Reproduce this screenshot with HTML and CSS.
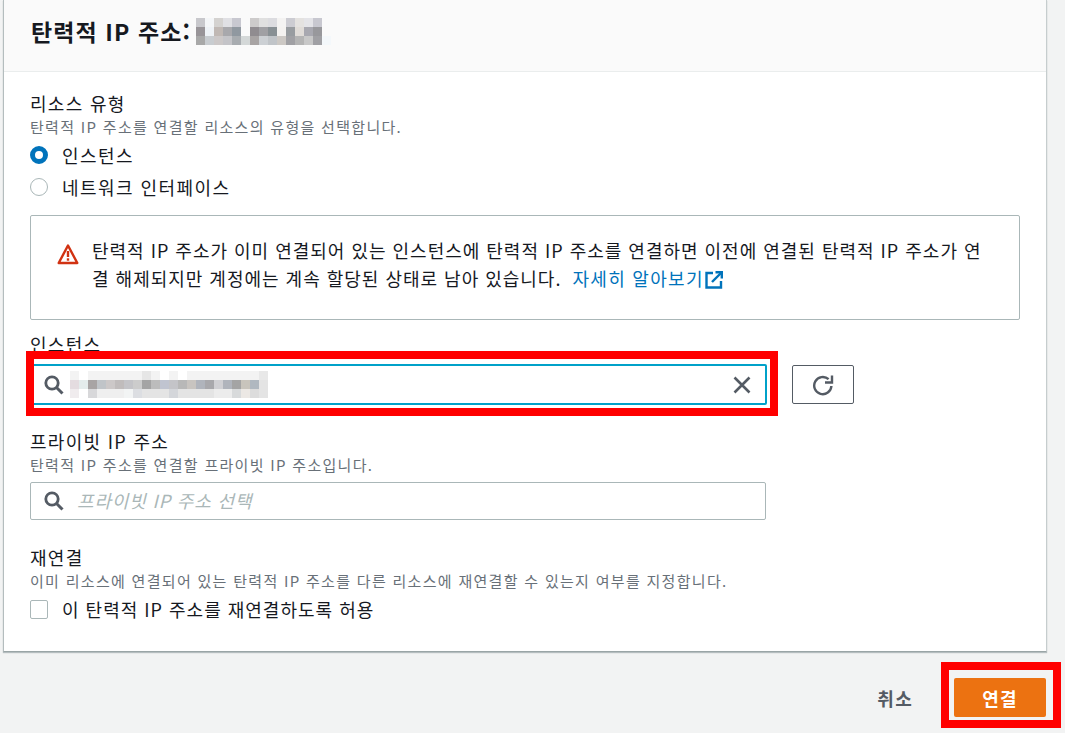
FILE: index.html
```html
<!DOCTYPE html>
<html lang="ko">
<head>
<meta charset="utf-8">
<title>탄력적 IP 주소 연결</title>
<link rel="stylesheet" href="styles.css">
</head>
<body>
<main class="page">
  <section class="card">
    <header class="card-head">
      <h1 class="title">탄력적 IP 주소:</h1>
      <svg class="mask" width="144" height="27" viewBox="0 0 16 3" shape-rendering="crispEdges" aria-hidden="true">
        <g><rect x="0" y="0" width="1" height="1" fill="#c8c8cc"/><rect x="1" y="0" width="1" height="1" fill="#f4f6f8"/><rect x="2" y="0" width="1" height="1" fill="#d4d2d0"/><rect x="3" y="0" width="1" height="1" fill="#e0e0e4"/><rect x="4" y="0" width="1" height="1" fill="#c8c8d0"/><rect x="6" y="0" width="1" height="1" fill="#cdcbcb"/><rect x="7" y="0" width="1" height="1" fill="#e0e0e0"/><rect x="8" y="0" width="1" height="1" fill="#dcdce0"/><rect x="9" y="0" width="1" height="1" fill="#f4f3f2"/><rect x="10" y="0" width="1" height="1" fill="#ccccd2"/><rect x="11" y="0" width="1" height="1" fill="#e4e2e0"/><rect x="12" y="0" width="1" height="1" fill="#e4e4e8"/><rect x="13" y="0" width="1" height="1" fill="#c8c8d0"/></g>
        <g><rect x="0" y="1" width="1" height="1" fill="#989498"/><rect x="1" y="1" width="1" height="1" fill="#eef2f6"/><rect x="2" y="1" width="1" height="1" fill="#c0b8b4"/><rect x="3" y="1" width="1" height="1" fill="#a8a8ac"/><rect x="4" y="1" width="1" height="1" fill="#9098a0"/><rect x="6" y="1" width="1" height="1" fill="#908c90"/><rect x="7" y="1" width="1" height="1" fill="#a0a0a4"/><rect x="8" y="1" width="1" height="1" fill="#889094"/><rect x="9" y="1" width="1" height="1" fill="#f4f2f0"/><rect x="10" y="1" width="1" height="1" fill="#989ca0"/><rect x="11" y="1" width="1" height="1" fill="#e0dcd8"/><rect x="12" y="1" width="1" height="1" fill="#a8a8b0"/><rect x="13" y="1" width="1" height="1" fill="#98989c"/></g>
        <g><rect x="0" y="2" width="1" height="1" fill="#a8a8a8"/><rect x="1" y="2" width="1" height="1" fill="#c8ccd0"/><rect x="2" y="2" width="1" height="1" fill="#ccc8c8"/><rect x="3" y="2" width="1" height="1" fill="#c4c4c8"/><rect x="4" y="2" width="1" height="1" fill="#a8acb0"/><rect x="5" y="2" width="1" height="1" fill="#d4d8d8"/><rect x="6" y="2" width="1" height="1" fill="#a8a4a4"/><rect x="7" y="2" width="1" height="1" fill="#ccd0d4"/><rect x="8" y="2" width="1" height="1" fill="#c0c4c8"/><rect x="9" y="2" width="1" height="1" fill="#ccc8c4"/><rect x="10" y="2" width="1" height="1" fill="#a0a0a4"/><rect x="11" y="2" width="1" height="1" fill="#b4b4b4"/><rect x="12" y="2" width="1" height="1" fill="#c8c8c8"/><rect x="13" y="2" width="1" height="1" fill="#a0a0a4"/><rect x="14" y="2" width="1" height="1" fill="#f4f8fb"/></g>
      </svg>
    </header>

    <div class="card-body">
      <div class="field field-type">
        <div class="label">리소스 유형</div>
        <div class="hint">탄력적 IP 주소를 연결할 리소스의 유형을 선택합니다.</div>
        <div class="option">
          <span class="radio radio-on"></span>
          <span class="option-text">인스턴스</span>
        </div>
        <div class="option">
          <span class="radio"></span>
          <span class="option-text">네트워크 인터페이스</span>
        </div>
      </div>

      <div class="alert">
        <svg class="alert-icon" width="22" height="22" viewBox="0 0 22 22" aria-hidden="true">
          <path d="M11 2.5 20.3 20H1.7Z" fill="none" stroke="#d13212" stroke-width="2.4" stroke-linejoin="round"/>
          <rect x="9.8" y="8" width="2.4" height="6" fill="#d13212"/>
          <rect x="9.8" y="15.3" width="2.4" height="2.4" fill="#d13212"/>
        </svg>
        <p class="alert-text">탄력적 IP 주소가 이미 연결되어 있는 인스턴스에 탄력적 IP 주소를 연결하면 이전에 연결된 탄력적 IP 주소가 연결 해제되지만 계정에는 계속 할당된 상태로 남아 있습니다. <a class="link" href="#">자세히 알아보기<svg class="ext-icon" width="18" height="18" viewBox="0 0 18 18" aria-hidden="true"><path d="M8 2H1.5V16.5H16V10" fill="none" stroke="#0073bb" stroke-width="2.4"/><path d="M10.5 1.2H16.8V7.5" fill="none" stroke="#0073bb" stroke-width="2.4"/><path d="M16.5 1.5 7 11" fill="none" stroke="#0073bb" stroke-width="2.4"/></svg></a></p>
      </div>

      <div class="field field-instance">
        <div class="label">인스턴스</div>
        <div class="input-row">
          <div class="search search-active">
            <svg class="search-icon" width="20" height="20" viewBox="0 0 20 20" aria-hidden="true"><circle cx="8" cy="8" r="6.2" fill="none" stroke="#545b64" stroke-width="2.8"/><path d="M12.5 12.5 18.5 18.5" stroke="#545b64" stroke-width="3"/></svg>
            <svg class="mask mask-input" width="198" height="27" viewBox="0 0 22 3" shape-rendering="crispEdges" aria-hidden="true">
              <g fill="#f3f3f3"><rect x="0" y="0" width="1" height="1"/><rect x="2" y="0" width="7" height="1"/><rect x="8" y="0" width="1" height="1" fill="#e6e6e6"/><rect x="9" y="0" width="1" height="1"/><rect x="11" y="0" width="1" height="1"/><rect x="13" y="0" width="8" height="1"/><rect x="21" y="0" width="1" height="1" fill="#e8e8e8"/></g>
              <rect x="0" y="1" width="1" height="1" fill="#e4dce0"/><rect x="1" y="1" width="1" height="1" fill="#e4ecec"/><rect x="2" y="1" width="1" height="1" fill="#a8a4a4"/><rect x="3" y="1" width="1" height="1" fill="#c0c4c8"/><rect x="4" y="1" width="1" height="1" fill="#ccc8c8"/><rect x="5" y="1" width="1" height="1" fill="#c0bcbc"/><rect x="6" y="1" width="1" height="1" fill="#c4c4c8"/><rect x="7" y="1" width="1" height="1" fill="#cccccc"/><rect x="8" y="1" width="1" height="1" fill="#a4a4a4"/><rect x="9" y="1" width="1" height="1" fill="#bcbcbc"/><rect x="10" y="1" width="1" height="1" fill="#c0c4d0"/><rect x="11" y="1" width="1" height="1" fill="#c4c4c8"/><rect x="12" y="1" width="1" height="1" fill="#b8b8b8"/><rect x="13" y="1" width="1" height="1" fill="#c8c4c0"/><rect x="14" y="1" width="1" height="1" fill="#b0b4bc"/><rect x="15" y="1" width="1" height="1" fill="#a8a8ac"/><rect x="16" y="1" width="1" height="1" fill="#d0d0d4"/><rect x="17" y="1" width="1" height="1" fill="#b0b4bc"/><rect x="18" y="1" width="1" height="1" fill="#a4a4a4"/><rect x="19" y="1" width="1" height="1" fill="#c8c4bc"/><rect x="20" y="1" width="1" height="1" fill="#b0b8c0"/><rect x="21" y="1" width="1" height="1" fill="#e4e4e4"/>
              <g fill="#e4e4e4"><rect x="0" y="2" width="1" height="1" fill="#f0ecee"/><rect x="2" y="2" width="1" height="1" fill="#d8d8da"/><rect x="3" y="2" width="3" height="1" fill="#efefef"/><rect x="6" y="2" width="1" height="1" fill="#f2f4f4"/><rect x="7" y="2" width="1" height="1" fill="#dcdee2"/><rect x="8" y="2" width="3" height="1"/><rect x="11" y="2" width="1" height="1" fill="#d4d6da"/><rect x="12" y="2" width="4" height="1"/><rect x="16" y="2" width="2" height="1" fill="#ececec"/><rect x="18" y="2" width="1" height="1" fill="#d8dadb"/><rect x="19" y="2" width="1" height="1" fill="#ece8e4"/><rect x="20" y="2" width="1" height="1" fill="#dcdcdc"/><rect x="21" y="2" width="1" height="1"/></g>
            </svg>
            <svg class="clear-icon" width="20" height="20" viewBox="0 0 20 20" aria-hidden="true"><path d="M2.5 2.5 17.5 17.5M17.5 2.5 2.5 17.5" stroke="#545b64" stroke-width="2.6"/></svg>
            <span class="callout callout-input"></span>
          </div>
          <button class="refresh" type="button" aria-label="새로 고침">
            <svg width="22" height="22" viewBox="0 0 22 22" aria-hidden="true"><path d="M16.6 5.2A8.6 8.6 0 1 0 19.4 12" fill="none" stroke="#545b64" stroke-width="2.4"/><path d="M20 1.5V8.5H13" fill="none" stroke="#545b64" stroke-width="2.4"/></svg>
          </button>
        </div>
      </div>

      <div class="field field-private">
        <div class="label">프라이빗 IP 주소</div>
        <div class="hint">탄력적 IP 주소를 연결할 프라이빗 IP 주소입니다.</div>
        <div class="search search-idle">
          <svg class="search-icon" width="20" height="20" viewBox="0 0 20 20" aria-hidden="true"><circle cx="8" cy="8" r="6.2" fill="none" stroke="#545b64" stroke-width="2.8"/><path d="M12.5 12.5 18.5 18.5" stroke="#545b64" stroke-width="3"/></svg>
          <span class="placeholder">프라이빗 IP 주소 선택</span>
        </div>
      </div>

      <div class="field field-reattach">
        <div class="label">재연결</div>
        <div class="hint">이미 리소스에 연결되어 있는 탄력적 IP 주소를 다른 리소스에 재연결할 수 있는지 여부를 지정합니다.</div>
        <div class="option option-check">
          <span class="checkbox"></span>
          <span class="option-text">이 탄력적 IP 주소를 재연결하도록 허용</span>
        </div>
      </div>
    </div>
  </section>

  <footer class="actions">
    <button class="btn-cancel" type="button">취소</button>
    <button class="btn-primary" type="button">연결<span class="callout callout-btn"></span></button>
  </footer>
</main>
</body>
</html>
```
FILE: styles.css
```css
* { box-sizing: border-box; }
html, body { margin: 0; padding: 0; height: 100%; }
body {
  background: #f2f3f3;
  color: #16191f;
  font-family: "Noto Sans CJK KR", "Open Sans", "Liberation Sans", sans-serif;
  overflow: hidden;
}
.page { width: 1065px; height: 733px; overflow: hidden; }

.card {
  margin-left: 3px;
  width: 1044px;
  height: 652px;
  background: #fff;
  border-left: 1px solid #b4bdbe;
  border-right: 1px solid #c6cdce;
  border-bottom: 1px solid #9aa5a6;
  box-shadow: 0 1px 1px rgba(0, 28, 36, .25);
}
.card-head {
  height: 72px;
  background: #fafafa;
  border-bottom: 1px solid #eaeded;
  padding: 18px 0 0 27px;
  display: flex;
  align-items: flex-start;
}
.title {
  margin: 0;
  height: 27px;
  font-size: 23px;
  line-height: 27px;
  font-weight: 700;
  letter-spacing: 1.1px;
  width: 165px;
  white-space: nowrap;
}
.mask { display: block; flex: none; }

.card-body { padding: 19px 26px 0; }
.label {
  font-size: 18px;
  line-height: 24px;
  letter-spacing: 1.3px;
  white-space: nowrap;
}
.hint {
  margin-top: 2px;
  font-size: 15px;
  line-height: 20px;
  letter-spacing: 1.3px;
  color: #687078;
  white-space: nowrap;
}
.option {
  display: flex;
  align-items: center;
  height: 32px;
}
.option-text {
  margin-left: 14px;
  font-size: 18px;
  letter-spacing: 1.45px;
  white-space: nowrap;
}
.radio {
  width: 18px;
  height: 18px;
  border-radius: 50%;
  border: 1.5px solid #aab7b8;
  background: #fff;
  flex: none;
}
.radio-on { border: 5px solid #0073bb; }

.field-type .hint { margin-bottom: 2px; }

.alert {
  margin-top: 12px;
  height: 105px;
  border: 1px solid #aab7b8;
  border-radius: 2px;
  padding: 20px 30px 0 26px;
  display: flex;
}
.alert-icon { flex: none; margin: 7px 13px 0 0; }
.alert-text {
  margin: 0;
  font-size: 18px;
  line-height: 28px;
  letter-spacing: .99px;
  word-break: break-all;
}
.link { color: #0073bb; text-decoration: none; margin-left: 5px; letter-spacing: 1.3px; }
.ext-icon { vertical-align: -3px; margin-left: 1px; }

.field-instance { margin-top: 12px; }
.input-row { display: flex; align-items: center; gap: 25px; margin-top: 8px; }
.search {
  position: relative;
  display: flex;
  align-items: center;
  width: 737px;
  background: #fff;
  border-radius: 2px;
}
.search-active { height: 41px; border: 2px solid #00a1c9; padding: 0 13px 0 12px; }
.search-idle { height: 38px; width: 736px; border: 1px solid #aab7b8; padding: 0 0 0 13px; }
.search-icon { flex: none; }
.mask-input { margin: 0 0 0 6px; }
.clear-icon { flex: none; margin-left: auto; }
.placeholder {
  margin-left: 13px;
  margin-bottom: 2px;
  font-size: 18px;
  font-style: italic;
  letter-spacing: .85px;
  color: #aab7b8;
  white-space: nowrap;
}
.refresh {
  width: 62px;
  height: 39px;
  padding: 0;
  border: 1px solid #545b64;
  border-radius: 2px;
  background: #fff;
  display: flex;
  align-items: center;
  justify-content: center;
}
.field-private { margin-top: 24px; }
.field-private .hint { margin-bottom: 7px; }
.field-reattach { margin-top: 25px; }
.option-check { height: 32px; margin-top: 2px; }
.option-check .option-text { letter-spacing: 1px; }
.checkbox {
  width: 18px;
  height: 19px;
  border: 1.5px solid #aab7b8;
  border-radius: 2px;
  background: #fff;
  flex: none;
}

.actions {
  display: flex;
  align-items: center;
  justify-content: flex-end;
  width: 1046px;
  margin-top: 26px;
}
.btn-cancel {
  border: 0;
  background: none;
  padding: 0;
  margin-right: 41px;
  font: inherit;
  font-size: 18px;
  font-weight: 700;
  letter-spacing: 1.3px;
  color: #545b64;
}
.btn-primary {
  position: relative;
  width: 92px;
  height: 39px;
  padding: 0;
  border: 0;
  border-radius: 2px;
  background: #ec7211;
  color: #fff;
  font: inherit;
  font-size: 18px;
  font-weight: 700;
  letter-spacing: 1.3px;
}

.callout {
  position: absolute;
  border: 8px solid #ff0000;
  pointer-events: none;
}
.callout-input { left: -6px; top: -15px; width: 752px; height: 65px; }
.callout-btn { left: -13px; top: -16px; width: 120px; height: 66px; }
```
